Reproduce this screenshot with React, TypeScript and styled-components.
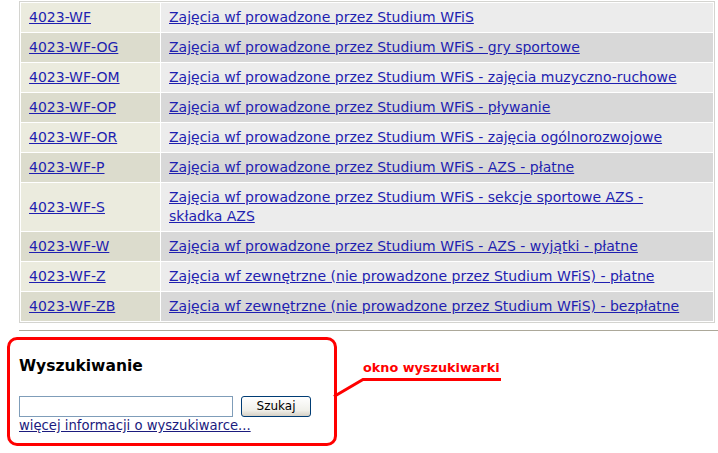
import React from 'react'
import styled, { createGlobalStyle } from 'styled-components';

const courses = [
  ['4023-WF', 'Zajęcia wf prowadzone przez Studium WFiS'],
  ['4023-WF-OG', 'Zajęcia wf prowadzone przez Studium WFiS - gry sportowe'],
  ['4023-WF-OM', 'Zajęcia wf prowadzone przez Studium WFiS - zajęcia muzyczno-ruchowe'],
  ['4023-WF-OP', 'Zajęcia wf prowadzone przez Studium WFiS - pływanie'],
  ['4023-WF-OR', 'Zajęcia wf prowadzone przez Studium WFiS - zajęcia ogólnorozwojowe'],
  ['4023-WF-P', 'Zajęcia wf prowadzone przez Studium WFiS - AZS - płatne'],
  ['4023-WF-S', 'Zajęcia wf prowadzone przez Studium WFiS - sekcje sportowe AZS - składka AZS'],
  ['4023-WF-W', 'Zajęcia wf prowadzone przez Studium WFiS - AZS - wyjątki - płatne'],
  ['4023-WF-Z', 'Zajęcia wf zewnętrzne (nie prowadzone przez Studium WFiS) - płatne'],
  ['4023-WF-ZB', 'Zajęcia wf zewnętrzne (nie prowadzone przez Studium WFiS) - bezpłatne'],
];

const App = () => {
  return (
    <Page>
      <GlobalStyle />
      <CourseTable>
        <tbody>
          {courses.map(([code, name], i) => (
            <tr key={code}>
              <CodeCell $even={i % 2 === 1}>
                <TableLink href="#">{code}</TableLink>
              </CodeCell>
              <NameCell $even={i % 2 === 1}>
                <TableLink href="#">{name}</TableLink>
              </NameCell>
            </tr>
          ))}
        </tbody>
      </CourseTable>
      <Rule />
      <SearchArea>
        <SearchBox>
          <Heading>Wyszukiwanie</Heading>
          <SearchForm onSubmit={(e) => e.preventDefault()}>
            <SearchInput type="text" />
            <SearchButton type="submit">Szukaj</SearchButton>
          </SearchForm>
          <MoreLink href="#">więcej informacji o wyszukiwarce...</MoreLink>
        </SearchBox>
        <Callout>
          <CalloutText>okno wyszukiwarki</CalloutText>
          <svg width="166" height="22" style={{ overflow: 'visible' }}>
            <polyline
              points="-3,19.5 26,2.5 164,2.5"
              fill="none"
              stroke="#ff0000"
              strokeWidth="3"
            />
          </svg>
        </Callout>
      </SearchArea>
    </Page>
  )
}

export default App;

const GlobalStyle = createGlobalStyle`
    body {
        margin: 0;
        background: #ffffff;
        font-family: "DejaVu Sans", Verdana, sans-serif;
    }
`;
const Page = styled.div`
    width: 718px;
    height: 453px;
    overflow: hidden;
    padding-top: 1px;
`;
const CourseTable = styled.table`
    margin-left: 19px;
    width: 696px;
    border: 1px solid #d4d4d0;
    border-collapse: separate;
    border-spacing: 1px;
    font-size: 14px;
    line-height: 19px;
`;
const CodeCell = styled.td<{ $even: boolean }>`
    width: 123px;
    padding: 5px 8px;
    vertical-align: middle;
    background-color: ${(p) => (p.$even ? '#dcdccd' : '#ebebde')};
`;
const NameCell = styled.td<{ $even: boolean }>`
    padding: 5px 24px 5px 8px;
    vertical-align: middle;
    background-color: ${(p) => (p.$even ? '#d8d8d8' : '#ececec')};
`;
const TableLink = styled.a`
    color: #1f1fb0;
    text-decoration: underline;
`;
const Rule = styled.div`
    margin: 7px 0 0 19px;
    height: 1px;
    background-color: #aca899;
`;
const SearchArea = styled.div`
    display: flex;
    align-items: flex-start;
    margin: 6px 0 0 7px;
`;
const SearchBox = styled.div`
    box-sizing: content-box;
    width: 315px;
    height: 86px;
    border: 3px solid #ff0000;
    border-radius: 10px;
    padding: 17px 0 0 9px;
`;
const Heading = styled.h2`
    margin: 0;
    font-size: 15.5px;
    line-height: 18px;
    font-weight: bold;
    color: #000000;
`;
const SearchForm = styled.form`
    display: flex;
    align-items: center;
    gap: 8px;
    margin-top: 21px;
`;
const SearchInput = styled.input`
    box-sizing: border-box;
    width: 214px;
    height: 21px;
    margin: 0;
    border: 1px solid #7f9db9;
    background: #ffffff;
    outline: none;
`;
const SearchButton = styled.button`
    box-sizing: border-box;
    width: 70px;
    height: 21px;
    margin: 0;
    margin-top: -1px;
    padding: 0;
    border: 1px solid #003c74;
    border-radius: 3px;
    background: linear-gradient(#ffffff, #f0f0ea 70%, #d6d0c5);
    font-family: "DejaVu Sans", Verdana, sans-serif;
    font-size: 12px;
    color: #000000;
`;
const MoreLink = styled.a`
    display: block;
    margin-top: 1px;
    font-size: 13.2px;
    line-height: 15px;
    color: #1b1b7e;
    text-decoration: underline;
`;
const Callout = styled.div`
    display: flex;
    flex-direction: column;
    gap: 2px;
    margin-top: 24px;
`;
const CalloutText = styled.div`
    margin-left: 26px;
    font-size: 12.8px;
    line-height: 14px;
    font-weight: bold;
    color: #ff0000;
`;
